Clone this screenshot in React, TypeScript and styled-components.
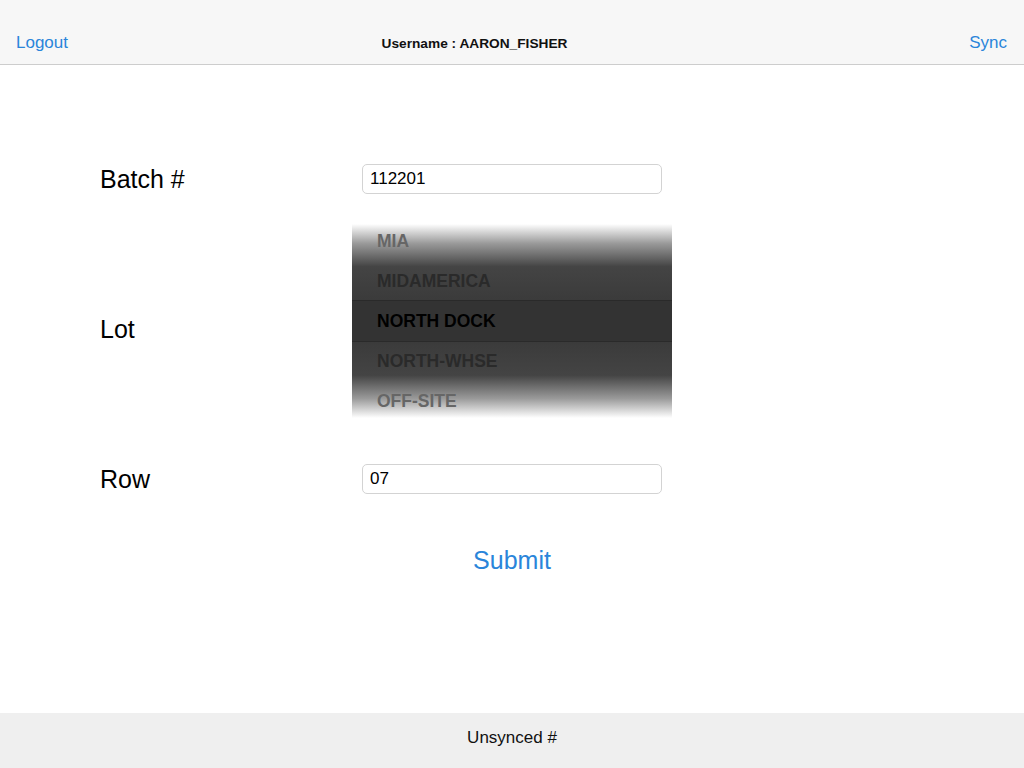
import React from 'react'
import styled, { createGlobalStyle } from 'styled-components'

const GlobalStyle = createGlobalStyle`
  html, body {
    margin: 0;
    padding: 0;
    background: #ffffff;
    font-family: "Liberation Sans", Arial, Helvetica, sans-serif;
  }
`;

const lots = ['MIA', 'MIDAMERICA', 'NORTH DOCK', 'NORTH-WHSE', 'OFF-SITE'];
const selectedLot = 'NORTH DOCK';

const App = () => {
  const selectedIndex = lots.indexOf(selectedLot);

  return (
    <Page>
      <GlobalStyle />
      <TopBar>
        <BarLink>Logout</BarLink>
        <UserName>Username : AARON_FISHER</UserName>
        <BarLink $right>Sync</BarLink>
      </TopBar>

      <Main>
        <Form>
          <FieldRow>
            <Label>Batch #</Label>
            <TextInput defaultValue="112201" />
          </FieldRow>

          <FieldRow $gap={30}>
            <Label $shift={16}>Lot</Label>
            <Picker>
              <PickerList>
                {lots.map((lot, i) => (
                  <PickerItem key={lot} $dist={Math.abs(i - selectedIndex)} $selected={i === selectedIndex}>
                    {lot}
                  </PickerItem>
                ))}
              </PickerList>
            </Picker>
          </FieldRow>

          <FieldRow $gap={46}>
            <Label>Row</Label>
            <TextInput defaultValue="07" />
          </FieldRow>
        </Form>

        <SubmitButton>Submit</SubmitButton>
      </Main>

      <Footer>Unsynced #</Footer>
    </Page>
  )
}

export default App

const Page = styled.div`
  display: flex;
  flex-direction: column;
  height: 768px;
  overflow: hidden;
`;

const TopBar = styled.header`
  display: grid;
  grid-template-columns: 1fr auto 1fr;
  align-items: center;
  height: 42px;
  padding: 22px 17px 0 16px;
  background-color: #f7f7f7;
  border-bottom: 1px solid #cdcdcd;
`;

const BarLink = styled.a<{ $right?: boolean }>`
  justify-self: ${(p) => (p.$right ? 'end' : 'start')};
  font-size: 17px;
  color: #2a85da;
  cursor: pointer;
`;

const UserName = styled.div`
  margin-right: 74px;
  font-size: 13.7px;
  font-weight: 700;
  color: #111;
`;

const Main = styled.main`
  flex: 1;
  display: flex;
  flex-direction: column;
`;

const Form = styled.div`
  display: flex;
  flex-direction: column;
  padding: 99px 0 0 100px;
`;

const FieldRow = styled.div<{ $gap?: number }>`
  display: grid;
  grid-template-columns: 252px auto;
  align-items: center;
  margin-top: ${(p) => p.$gap ?? 0}px;
`;

const Label = styled.div<{ $shift?: number }>`
  font-size: 25px;
  color: #000;
  padding-top: ${(p) => p.$shift ?? 0}px;
`;

const TextInput = styled.input`
  box-sizing: border-box;
  width: 300px;
  height: 30px;
  margin-left: 10px;
  padding: 0 7px;
  border: 1px solid #d3d3d3;
  border-radius: 5px;
  font-family: "Liberation Sans", Arial, sans-serif;
  font-size: 17px;
  color: #000;
  outline: none;
`;

const Picker = styled.div`
  width: 320px;
  height: 194px;
  overflow: hidden;
  background: linear-gradient(
    to bottom,
    #ffffff 0%,
    #9a9a9a 10%,
    #444444 22%,
    #353535 50%,
    #444444 78%,
    #9a9a9a 90%,
    #ffffff 100%
  );
`;

const PickerList = styled.div`
  display: flex;
  flex-direction: column;
  margin-top: -3px;
`;

const PickerItem = styled.div<{ $dist: number; $selected: boolean }>`
  box-sizing: border-box;
  height: 40px;
  padding-left: 25px;
  display: flex;
  align-items: center;
  font-size: 17.5px;
  font-weight: 700;
  color: ${(p) => (p.$selected ? '#000' : p.$dist === 1 ? '#2a2a2a' : '#666')};
  ${(p) =>
    p.$selected
      ? 'background: #333333; box-shadow: 0 -1px 0 #2a2a2a, 0 1px 0 #2a2a2a;'
      : ''}
`;

const SubmitButton = styled.button`
  align-self: center;
  margin-top: 52px;
  padding: 0;
  background: none;
  border: none;
  font-family: "Liberation Sans", Arial, sans-serif;
  font-size: 25px;
  color: #2a85da;
  cursor: pointer;
`;

const Footer = styled.footer`
  display: flex;
  align-items: center;
  justify-content: center;
  height: 55px;
  padding-bottom: 6px;
  box-sizing: border-box;
  background-color: #efefef;
  font-size: 17px;
  color: #111;
`;
